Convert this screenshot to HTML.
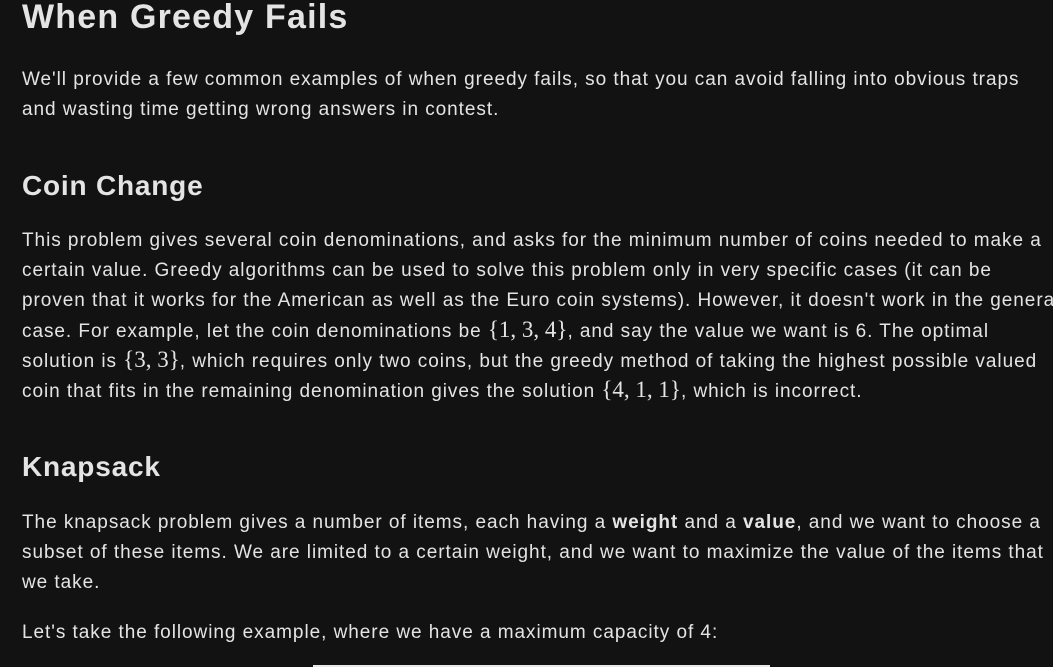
<!DOCTYPE html>
<html><head><meta charset="utf-8"><style>
html,body{margin:0;padding:0;background:#121212;width:1053px;height:667px;overflow:hidden;position:relative}
div{position:absolute;left:22px;white-space:nowrap;color:#e4e4e4;font-family:"Liberation Sans",sans-serif}
.p{font-size:19px;line-height:30px;height:30px;letter-spacing:0.95px}
.h1{font-size:34px;font-weight:bold;line-height:40px;letter-spacing:1.2px}
.h2{font-size:28px;font-weight:bold;line-height:36px;letter-spacing:0.8px}
.m{font-family:"Liberation Serif",serif;font-size:23px;letter-spacing:0}
b{font-weight:bold}
</style></head><body>
<div class="h1" style="top:-3px">When Greedy Fails</div>
<div class="p" style="top:65px">We'll provide a few common examples of when greedy fails, so that you can avoid falling into obvious traps</div>
<div class="p" style="top:95px">and wasting time getting wrong answers in contest.</div>
<div class="h2" style="top:168px">Coin Change</div>
<div class="p" style="top:226px">This problem gives several coin denominations, and asks for the minimum number of coins needed to make a</div>
<div class="p" style="top:256px">certain value. Greedy algorithms can be used to solve this problem only in very specific cases (it can be</div>
<div class="p" style="top:286px">proven that it works for the American as well as the Euro coin systems). However, it doesn't work in the general</div>
<div class="p" style="top:315px">case. For example, let the coin denominations be <span class="m">{1, 3, 4}</span>, and say the value we want is 6. The optimal</div>
<div class="p" style="top:345px">solution is <span class="m">{3, 3}</span>, which requires only two coins, but the greedy method of taking the highest possible valued</div>
<div class="p" style="top:375px">coin that fits in the remaining denomination gives the solution <span class="m">{4, 1, 1}</span>, which is incorrect.</div>
<div class="h2" style="top:449px">Knapsack</div>
<div class="p" style="top:508px">The knapsack problem gives a number of items, each having a <b>weight</b> and a <b>value</b>, and we want to choose a</div>
<div class="p" style="top:538px">subset of these items. We are limited to a certain weight, and we want to maximize the value of the items that</div>
<div class="p" style="top:568px">we take.</div>
<div class="p" style="top:618px">Let's take the following example, where we have a maximum capacity of 4:</div>
<div style="left:313px;top:665px;width:457px;height:2px;background:#e8e8e8"></div>
</body></html>
